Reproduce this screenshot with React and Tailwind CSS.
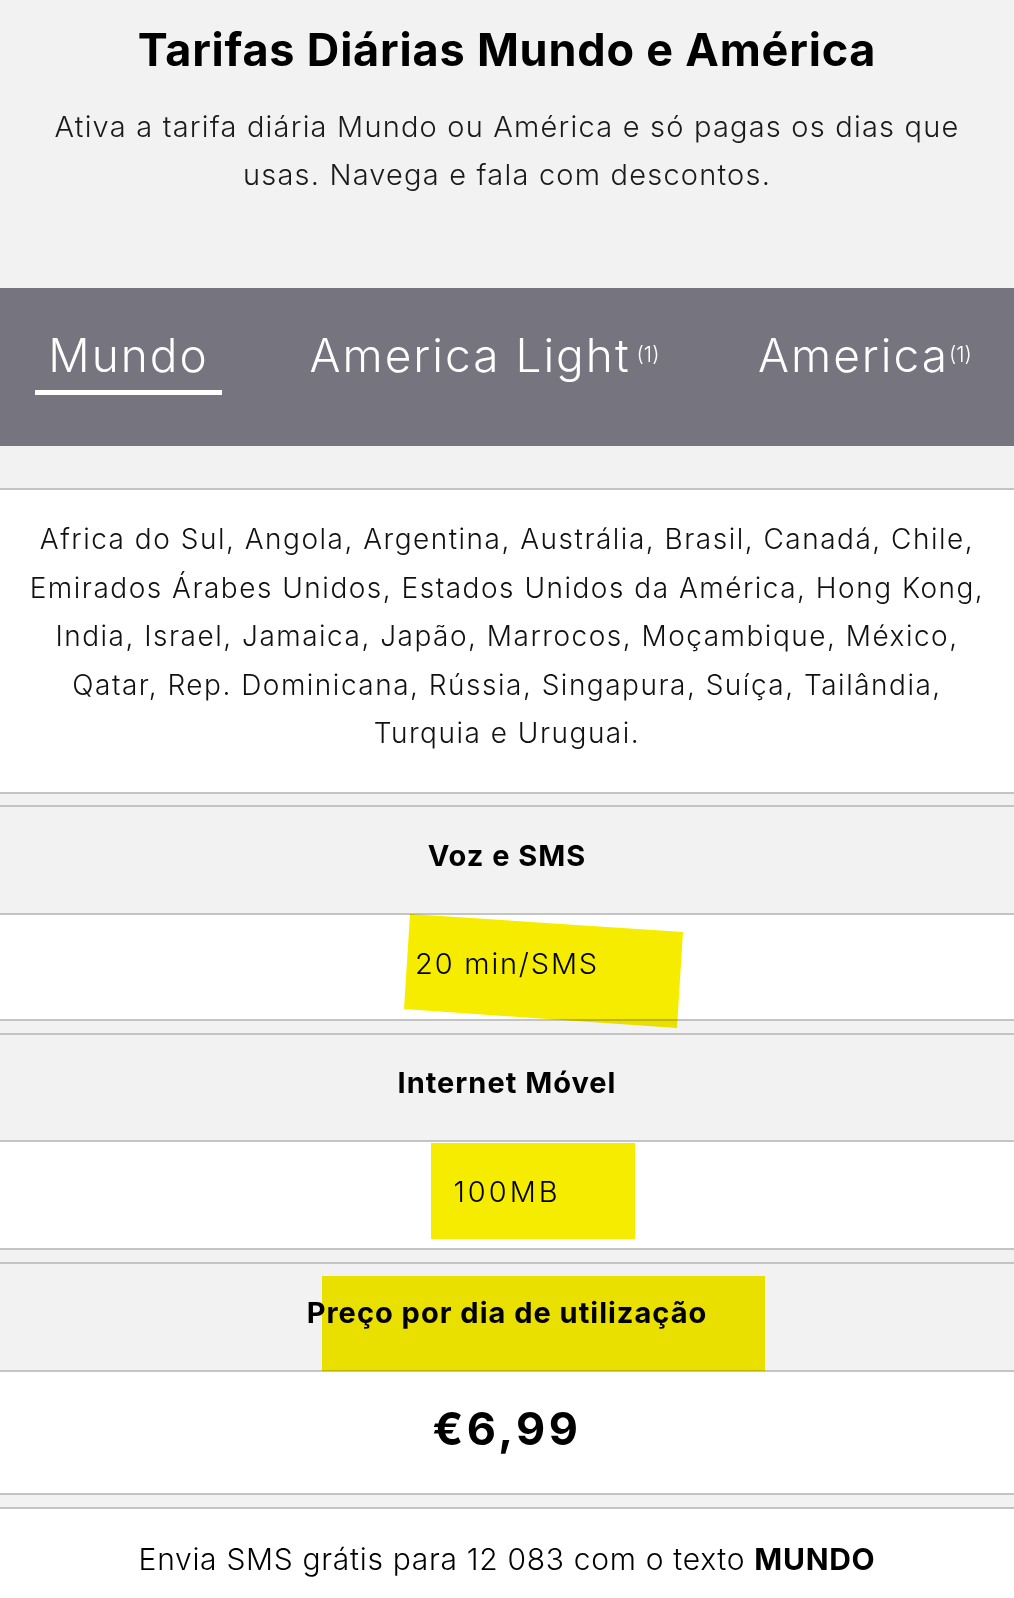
const tabs = [
  { label: "Mundo", sup: null, box: "ml-[35px] w-[187px]", active: true },
  { label: "America Light", sup: " (1)", box: "ml-[75px] w-[375px]", active: false },
  { label: "America", sup: "(1)", box: "ml-[73px] w-[240px]", active: false },
];

function Group({ title, children, headerClass = "h-[106px]", valueClass = "h-[106px]" }) {
  return (
    <div className="border-y-2 border-[#c4c4c4]">
      <div
        className={`flex items-center justify-center bg-[#f2f2f2] pb-[8px] text-[29px] font-bold tracking-[1px] ${headerClass}`}
      >
        {title}
      </div>
      <div className={`flex items-center justify-center border-t-2 border-[#c4c4c4] bg-white pb-[6px] ${valueClass}`}>
        {children}
      </div>
    </div>
  );
}

export default function App() {
  return (
    <div className="relative min-h-[1598px] w-full overflow-hidden bg-[#f2f2f2] font-['Inter',sans-serif] text-black">
      <header className="pt-[27px] text-center">
        <h1 className="text-[45px] font-bold leading-[45px] tracking-[0.8px]">Tarifas Diárias Mundo e América</h1>
        <p className="mt-[31px] text-[29px] font-light leading-[48px] tracking-[1.2px] text-[#1a1a1a]">
          Ativa a tarifa diária Mundo ou América e só pagas os dias que
          <br />
          usas. Navega e fala com descontos.
        </p>
      </header>

      <nav className="mt-[89px] flex h-[158px] items-start bg-[#76757f]">
        {tabs.map((t) => (
          <div key={t.label} className={`flex flex-col items-stretch pt-[41px] ${t.box}`}>
            <span className="whitespace-nowrap text-center text-[46px] font-light leading-[52px] tracking-[2px] text-white">
              {t.label}
              {t.sup && <sup className="text-[21px] font-light tracking-normal">{t.sup}</sup>}
            </span>
            <span className={`mt-[9px] h-[5px] ${t.active ? "bg-white" : "bg-transparent"}`} />
          </div>
        ))}
      </nav>

      <div className="h-[42px]" />

      <section className="border-y-2 border-[#c4c4c4] bg-white pb-[34px] pt-[25px] text-center text-[28px] font-light leading-[48.5px] tracking-[1.5px] text-[#111]">
        Africa do Sul, Angola, Argentina, Austrália, Brasil, Canadá, Chile,
        <br />
        Emirados Árabes Unidos, Estados Unidos da América, Hong Kong,
        <br />
        India, Israel, Jamaica, Japão, Marrocos, Moçambique, México,
        <br />
        Qatar, Rep. Dominicana, Rússia, Singapura, Suíça, Tailândia,
        <br />
        Turquia e Uruguai.
      </section>

      <div className="h-[11px]" />
      <Group title="Voz e SMS">
        <span className="text-[29px] font-light tracking-[1.8px]">20 min/SMS</span>
      </Group>
      <div className="h-[12px]" />
      <Group title="Internet Móvel" headerClass="h-[105px]" valueClass="h-[108px]">
        <span className="text-[29px] font-light tracking-[3px]">100MB</span>
      </Group>
      <div className="h-[12px]" />
      <Group title="Preço por dia de utilização" valueClass="h-[123px]">
        <span className="text-[45px] font-bold tracking-[3.5px]">€6,99</span>
      </Group>
      <div className="h-[12px]" />

      <footer className="border-t-2 border-[#c4c4c4] bg-white pb-[18px] pt-[26px] text-center text-[30px] font-light leading-[48px] tracking-[0.7px]">
        Envia SMS grátis para 12 083 com o texto <span className="font-bold">MUNDO</span>
      </footer>

      {/* marker highlights drawn over the screenshot */}
      <svg
        className="pointer-events-none absolute left-[400px] top-[910px] mix-blend-multiply"
        width="290"
        height="122"
        viewBox="0 0 290 122"
      >
        <polygon points="10,4 283,22 277,118 4,99" fill="#f6ec00" />
      </svg>
      <div className="pointer-events-none absolute left-[431px] top-[1143px] h-[96px] w-[204px] bg-[#f6ec00] mix-blend-multiply" />
      <div className="pointer-events-none absolute left-[322px] top-[1276px] h-[95px] w-[443px] bg-[#f6ec00] mix-blend-multiply" />
    </div>
  );
}
